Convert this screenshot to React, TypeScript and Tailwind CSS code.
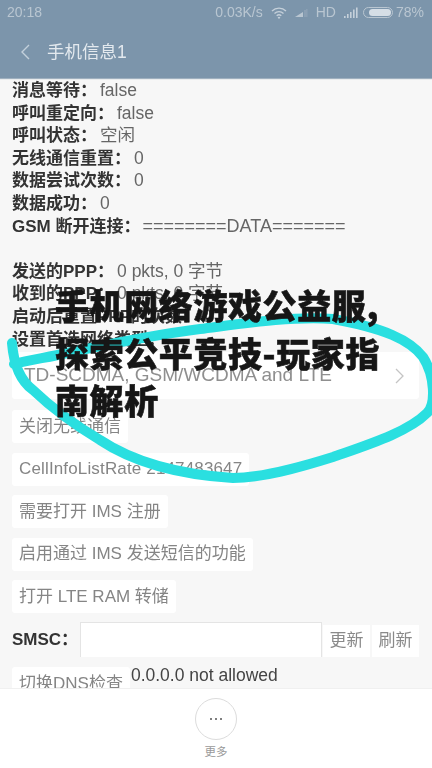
const font = { fontFamily: '"Liberation Sans", "Noto Sans CJK SC", sans-serif' };

function Info({ label, value, wide }: { label: string; value: string; wide?: boolean }) {
  return (
    <div className="h-[22.6px] leading-[22.6px] whitespace-nowrap text-[17px] text-[#666666]">
      <span className="font-bold text-[#333333]">{label}</span>
      <span className={wide ? "ml-[2px] text-[18px]" : "ml-[3px] text-[17.5px]"}>{value}</span>
    </div>
  );
}

function Btn({ children, wide }: { children: string; wide?: boolean }) {
  return (
    <div className={`w-fit h-[33px] px-[7px] flex items-center bg-white rounded-[3px] text-[17px] text-[#858585] whitespace-nowrap ${wide ? "tracking-[0.15px]" : ""}`}>
      {children}
    </div>
  );
}

function StatusBar() {
  return (
    <div className="h-[25px] flex items-center justify-between pl-[7px] pr-[8px] text-[14px] text-[#b9c6d1]">
      <span>20:18</span>
      <div className="flex items-center">
        <span>0.03K/s</span>
        <svg className="ml-[8px]" width="16" height="12" viewBox="0 0 16 12" fill="none" stroke="#c5d0da" strokeWidth="1.3">
          <path d="M1 4a10 10 0 0 1 14 0M3.500 6.500a6.500 6.500 0 0 1 9 0M5.700 8.800a3.400 3.400 0 0 1 4.600 0" />
          <path d="M8 12l-1.400-1.600a2 2 0 0 1 2.800 0z" fill="#c5d0da" stroke="none" />
        </svg>
        <svg className="ml-[7px]" width="15" height="10" viewBox="0 0 15 10" fill="#b9c6d1">
          <path d="M1 9l8-5v5z" />
          <path d="M10.500 2h1v7h-1zM12.500 1h.8v8h-.8z" opacity=".5" />
        </svg>
        <span className="ml-[7px]">HD</span>
        <svg className="ml-[7px]" width="15" height="11" viewBox="0 0 15 11" fill="#c5d0da">
          <path d="M1 9h1.600v2H1zM4 7h1.600v4H4zM7 5h1.600v6H7zM10 2.500h1.600V11H10zM13 .5h1.600V11H13z" />
        </svg>
        <div className="ml-[5px] w-[30px] h-[11px] rounded-full border border-[#b9c6d1] p-[1px] flex justify-end">
          <div className="w-[22px] h-full rounded-full bg-[#d5dee6]" />
        </div>
        <span className="ml-[3px]">78%</span>
      </div>
    </div>
  );
}

export default function App() {
  return (
    <div style={font} className="relative w-[432px] h-[768px] overflow-hidden bg-[#f7f7f7]">
      <div className="blur-[0.4px]">
        <div className="h-[78px] bg-[#7c95ab] shadow-[0_1px_1px_#9fb0bf]">
          <StatusBar />
          <div className="h-[53px] flex items-center pl-[20px] pt-[1px] gap-[17px]">
            <svg width="10" height="16" viewBox="0 0 10 16" fill="none" stroke="#c3d0db" strokeWidth="1.4">
              <path d="M9 1L2 8l7 7" />
            </svg>
            <span className="text-[17.5px] text-[#e3e9ee]">手机信息1</span>
          </div>
        </div>

        <div className="h-[610px] overflow-hidden pt-[1px] pl-[12px] pr-[13px]">
          <Info label="消息等待：" value="false" />
          <Info label="呼叫重定向：" value="false" />
          <Info label="呼叫状态：" value="空闲" />
          <Info label="无线通信重置：" value="0" />
          <Info label="数据尝试次数：" value="0" />
          <Info label="数据成功：" value="0" />
          <Info label="GSM 断开连接：" value="========DATA=======" wide />
          <div className="h-[22.6px]" />
          <Info label="发送的PPP：" value="0 pkts, 0 字节" />
          <Info label="收到的PPP：" value="0 pkts, 0 字节" />
          <Info label="启动后重置PPP的次数：" value="0" />
          <Info label="设置首选网络类型：" value="" />

          <div className="mt-[2px] h-[47px] bg-white rounded-[3px] flex items-center justify-between pl-[12px] pr-[14px] text-[19px] text-[#8f8f8f]">
            <span>TD-SCDMA, GSM/WCDMA and LTE</span>
            <svg width="10" height="16" viewBox="0 0 10 16" fill="none" stroke="#c4c4c4" strokeWidth="1.3">
              <path d="M1 1l7 7-7 7" />
            </svg>
          </div>

          <div className="mt-[11px] flex flex-col gap-[9.5px]">
            <Btn>关闭无线通信</Btn>
            <Btn wide>CellInfoListRate 2147483647</Btn>
            <Btn>需要打开 IMS 注册</Btn>
            <Btn>启用通过 IMS 发送短信的功能</Btn>
            <Btn>打开 LTE RAM 转储</Btn>
          </div>

          <div className="mt-[9px] flex items-end h-[35px]">
            <span className="w-[68px] self-center font-bold text-[17px] text-[#333333]">SMSC：</span>
            <div className="w-[242px] h-[35px] bg-white border-t border-x border-[#e4e4e4]" />
            <div className="ml-[1px] w-[47px] h-[32px] flex items-center justify-center bg-white text-[17px] text-[#8a8a8a]">更新</div>
            <div className="ml-[2px] w-[47px] h-[32px] flex items-center justify-center bg-white text-[17px] text-[#8a8a8a]">刷新</div>
          </div>

          <div className="mt-[10px] flex items-start">
            <Btn>切换DNS检查</Btn>
            <span className="ml-[1px] -mt-[2px] text-[17.5px] leading-[20px] text-[#444444]">0.0.0.0 not allowed</span>
          </div>
        </div>

        <div className="absolute left-0 right-0 top-[688px] h-[80px] bg-white border-t border-[#f0f0f0] flex flex-col items-center">
          <div className="mt-[9px] w-[42px] h-[42px] rounded-full border border-[#dcdcdc] flex items-center justify-center gap-[3px]">
            <span className="w-[2px] h-[2px] rounded-full bg-[#555555]" />
            <span className="w-[2px] h-[2px] rounded-full bg-[#555555]" />
            <span className="w-[2px] h-[2px] rounded-full bg-[#555555]" />
          </div>
          <span className="mt-[5px] text-[11.5px] leading-[14px] text-[#9a9a9a]">更多</span>
        </div>
      </div>

      <svg className="absolute left-0 top-0 pointer-events-none" width="432" height="768" viewBox="0 0 432 768" fill="none">
        <path
          d="M12 343C14 368 22 382 33 390C56 412 80 428 100 440C130 460 170 474 233 478C262 478 298 468 333 457C370 444 408 432 427 413C436 404 435 376 423 357C410 340 384 328 333 319C290 316 240 324 200 329C160 334 100 346 67 353C50 357 30 360 14 364"
          stroke="#2adfe0"
          strokeWidth="10"
          strokeLinecap="round"
        />
      </svg>

      <div
        className="absolute left-[55px] top-[281px] w-[330px] text-[34px] leading-[47.5px] font-black text-[#161616] tracking-[0.6px] [-webkit-text-stroke:0.6px_#161616]"
        style={{ fontFamily: '"Noto Sans CJK SC", sans-serif' }}
      >
        手机网络游戏公益服,探索公平竞技-玩家指南解析
      </div>
    </div>
  );
}
